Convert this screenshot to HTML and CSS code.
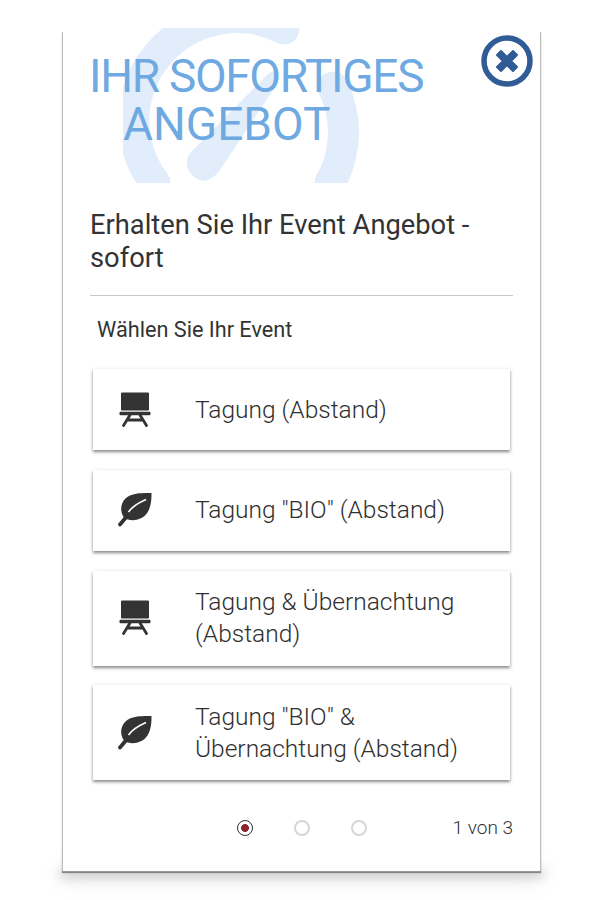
FILE: index.html
```html
<!DOCTYPE html>
<html lang="de">
<head>
<meta charset="utf-8">
<title>Ihr sofortiges Angebot</title>
<link rel="stylesheet" href="styles.css">
</head>
<body>
<main class="panel">
  <header class="hero">
    <svg class="gauge" width="240" height="155" viewBox="123 28 240 155" aria-hidden="true">
      <path class="gauge-arc" d="M155 183 A103 103 0 0 1 284 29" />
      <path class="gauge-arc" d="M330 183 A103 103 0 0 0 333 87" />
      <path class="gauge-needle" d="M191 152 L262 80 Q272 68 277 73 Q282 78 273 90 L220 170 Q207 187 194 177 Q181 165 191 152 Z" />
    </svg>
    <h1 class="title"><span class="title-first">IHR SOFORTIGES</span> <span class="title-second">ANGEBOT</span></h1>
    <button class="close" aria-label="Schließen">
      <svg width="52" height="52" viewBox="0 0 52 52">
        <circle cx="26" cy="26" r="23" fill="none" stroke="#2f5b96" stroke-width="5.5"/>
        <path d="M26 22 L32 16 L36 20 L30 26 L36 32 L32 36 L26 30 L20 36 L16 32 L22 26 L16 20 L20 16 Z" fill="#2f5b96" stroke="#2f5b96" stroke-width="2" stroke-linejoin="round"/>
      </svg>
    </button>
  </header>
  <h2 class="subtitle">Erhalten Sie Ihr Event Angebot - sofort</h2>
  <hr class="rule">
  <p class="prompt">Wählen Sie Ihr Event</p>
  <ul class="options">
    <li class="card">
      <svg class="icon" width="36" height="40" viewBox="0 0 36 40"><use href="#board"/></svg>
      <span class="label">Tagung (Abstand)</span>
    </li>
    <li class="card">
      <svg class="icon" width="36" height="40" viewBox="0 0 36 40"><use href="#leaf"/></svg>
      <span class="label">Tagung "BIO" (Abstand)</span>
    </li>
    <li class="card">
      <svg class="icon" width="36" height="40" viewBox="0 0 36 40"><use href="#board"/></svg>
      <span class="label">Tagung &amp; Übernachtung (Abstand)</span>
    </li>
    <li class="card">
      <svg class="icon" width="36" height="40" viewBox="0 0 36 40"><use href="#leaf"/></svg>
      <span class="label">Tagung "BIO" &amp; Übernachtung (Abstand)</span>
    </li>
  </ul>
  <footer class="pager">
    <span class="dot dot-active"></span>
    <span class="dot"></span>
    <span class="dot"></span>
    <span class="count">1 von 3</span>
  </footer>
</main>
<svg class="defs" width="0" height="0" aria-hidden="true">
  <defs>
    <g id="board">
      <rect x="4" y="2.5" width="28" height="18" rx="1" fill="#333"/>
      <rect x="2.5" y="21.8" width="31" height="3.4" rx="1" fill="#333"/>
      <path d="M13 25 L6.5 35.5 M23 25 L29.5 35.5 M10 30 H26" fill="none" stroke="#333" stroke-width="2.8" stroke-linecap="round"/>
    </g>
    <g id="leaf">
      <path d="M34.5 3 C27 3 15 2.5 9 8 C3.5 13 2.5 21 7 27.5 C13 32 25 31 30.5 22.5 C34.5 16 34.5 8 34.5 3 Z" fill="#333"/>
      <path d="M29 9.5 C21 13 15 17 11.5 22" fill="none" stroke="#fff" stroke-width="1.6"/>
      <path d="M3 34.5 L11 25" fill="none" stroke="#333" stroke-width="3.8" stroke-linecap="round"/>
    </g>
  </defs>
</svg>
</body>
</html>
```
FILE: styles.css
```css
* { box-sizing: border-box; }
html { margin: 0; padding: 0; background: #fff; }
body {
  margin: 0;
  width: 600px;
  height: 900px;
  overflow: hidden;
  padding: 32px 0 0 62px;
  font-family: Roboto, "Noto Sans", sans-serif;
  color: #333;
}
.defs { position: absolute; }
.panel {
  position: relative;
  width: 479px;
  height: 839px;
  background: #fff;
  border-left: 1px solid #bdbdbd;
  border-right: 1px solid #bdbdbd;
  box-shadow: 0 2px 1px rgba(0,0,0,.4);
  padding: 0 27px;
  display: flex;
  flex-direction: column;
}
.panel::after {
  content: "";
  position: absolute;
  left: 0;
  right: 0;
  bottom: -1px;
  height: 1px;
  z-index: -1;
  box-shadow: 0 2px 12px 3px rgba(0,0,0,.26), 0 2px 30px 4px rgba(0,0,0,.09);
}
.hero {
  height: 151px;
}
.gauge {
  position: absolute;
  left: 60px;
  top: -4px;
}
.gauge-arc {
  fill: none;
  stroke: #e1edfa;
  stroke-width: 31;
  stroke-linecap: round;
}
.gauge-needle { fill: #e1edfa; }
.title {
  position: relative;
  margin: 0 0 0 -1px;
  padding: 20px 0 0;
  font-size: 46px;
  line-height: 48px;
  font-weight: 400;
  color: #6fa9e2;
}
.title-first {
  display: block;
  letter-spacing: -1.3px;
}
.title-second {
  display: block;
  margin-left: 34px;
}
.close {
  position: absolute;
  top: 3px;
  right: 7px;
  padding: 0;
  border: 0;
  background: none;
  line-height: 0;
}
.subtitle {
  margin: 26px 0 0;
  font-size: 27.3px;
  line-height: 33px;
  font-weight: 400;
  color: #333;
}
.rule {
  margin: 20px 0 0;
  border: 0;
  border-top: 1px solid #c8c8c8;
}
.prompt {
  margin: 21px 0 0 7px;
  font-size: 21.7px;
  line-height: 26px;
}
.options {
  list-style: none;
  margin: 26px 0 0 3px;
  padding: 0;
  width: 417px;
  display: flex;
  flex-direction: column;
  gap: 19.75px;
}
.card {
  display: flex;
  align-items: center;
  min-height: 81px;
  padding: 15.5px 20px 15.5px 24px;
  background: #fff;
  box-shadow: 0 2px 3px rgba(0,0,0,.45), 0 0 4px rgba(0,0,0,.06);
}
.icon { flex: none; }
.label {
  margin-left: 42px;
  font-size: 24.5px;
  line-height: 32px;
  font-weight: 300;
  color: #2f2f2f;
}
.pager {
  display: flex;
  align-items: center;
  margin-top: 36px;
  padding-left: 147px;
}
.dot {
  width: 16px;
  height: 16px;
  margin-right: 41px;
  border-radius: 50%;
  border: 2px solid #d6d6d6;
  background: #fff;
}
.dot-active {
  border: 1.5px solid #333;
  background: radial-gradient(circle, #8e2430 0 3.6px, #fff 4.2px);
}
.count {
  margin-left: auto;
  font-size: 19px;
  font-weight: 300;
  color: #2f2f2f;
}
```
